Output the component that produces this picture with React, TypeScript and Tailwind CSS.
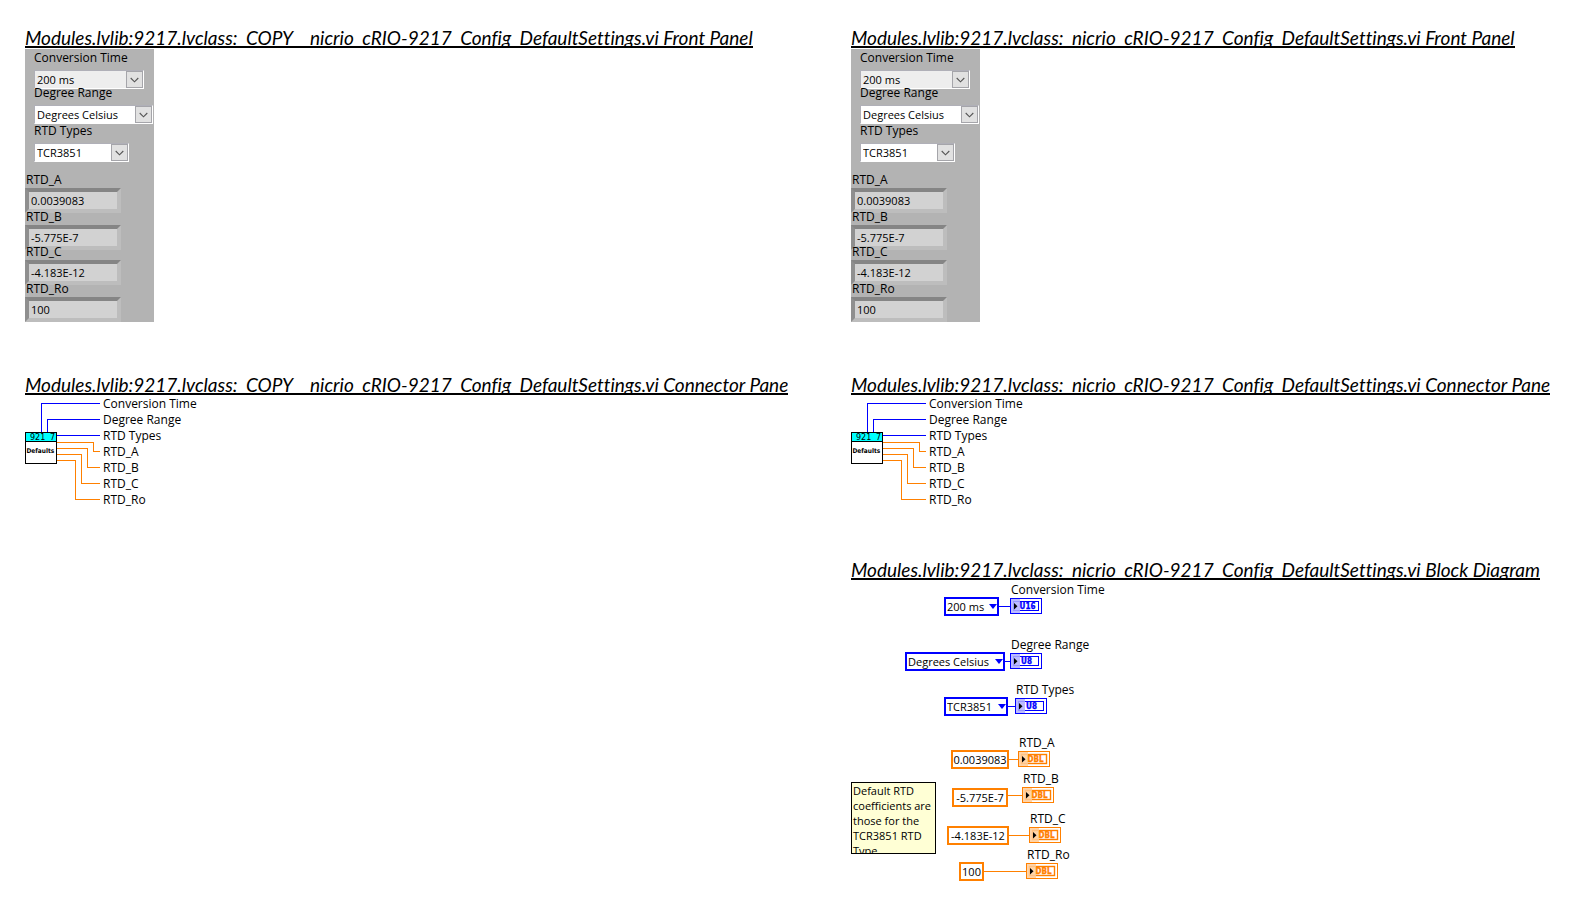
import { useId } from 'react';

const LABEL = "font-['Open_Sans','Noto_Sans',sans-serif] text-[12px]";
const VALUE = "font-['Open_Sans','Noto_Sans',sans-serif] text-[11px]";

function Heading({ children }: { children: string }) {
  return (
    <h2 className="h-7 w-max overflow-hidden border-b-2 border-black font-['Lato','Open_Sans',sans-serif] text-[19px] leading-[36px] italic whitespace-nowrap [font-variant-ligatures:none]">
      {children}
    </h2>
  );
}

function DropDown({ label, value, width, muted, className }: { label: string; value: string; width: string; muted?: boolean; className?: string }) {
  const id = useId();
  return (
    <div className={`pl-[9px] ${className ?? ''}`}>
      <label htmlFor={id} className={`relative z-10 block leading-2 ${LABEL}`}>
        {label}
      </label>
      <div className={`relative mt-2 ${width}`}>
        <select
          id={id}
          className={`block h-[19px] w-full appearance-none border border-[#b0b0b8] border-r-white border-b-white pl-[2px] leading-[17px] ${VALUE} ${muted ? 'bg-[#eeeeee]' : 'bg-white'}`}
        >
          <option>{value}</option>
        </select>
        <span className="pointer-events-none absolute top-px right-px flex h-[17px] w-[17px] items-center justify-center border border-[#a5a5aa] bg-[#e1e1e1]">
          <svg width="9" height="6" viewBox="0 0 9 6" fill="none" stroke="#555" strokeWidth="1.1">
            <path d="M0.7 1l3.8 3.8L8.3 1" />
          </svg>
        </span>
      </div>
    </div>
  );
}

function Indicator({ label, value, className }: { label: string; value: string; className?: string }) {
  const id = useId();
  return (
    <div className={className}>
      <label htmlFor={id} className={`relative z-10 block pl-px leading-2 ${LABEL}`}>
        {label}
      </label>
      <input
        id={id}
        readOnly
        value={value}
        className={`mt-[4px] block h-[25px] w-24 border-4 border-t-[#858585] border-r-[#bdbdbd] border-b-[#bdbdbd] border-l-[#8f8f8f] bg-[#d2d2d2] pl-[2px] leading-[17px] ${VALUE}`}
      />
    </div>
  );
}

function FrontPanel() {
  return (
    <div className="mt-px h-[273px] w-[129px] bg-[#b3b3b3] pt-[5px]">
      <DropDown label="Conversion Time" value="200 ms" width="w-[110px]" muted />
      <DropDown label="Degree Range" value="Degrees Celsius" width="w-[119px]" />
      <DropDown label="RTD Types" value="TCR3851" width="w-[95px]" className="mt-[3px]" />
      <Indicator label="RTD_A" value="0.0039083" className="mt-[14px]" />
      <Indicator label="RTD_B" value="-5.775E-7" />
      <Indicator label="RTD_C" value="-4.183E-12" className="-mt-[2px]" />
      <Indicator label="RTD_Ro" value="100" />
    </div>
  );
}

const TERMINALS = ['Conversion Time', 'Degree Range', 'RTD Types', 'RTD_A', 'RTD_B', 'RTD_C', 'RTD_Ro'];

function ConnectorPane() {
  return (
    <div className="mt-px flex">
      <svg width="78" height="112" viewBox="0 0 78 112" fill="none" strokeWidth="1" shapeRendering="crispEdges">
        <g stroke="#0000ff">
          <path d="M16.5 36V7.5H75" />
          <path d="M22.5 36V23.5H75" />
          <path d="M32 39.5H75" />
        </g>
        <g stroke="#ff8000">
          <path d="M32 46.5H68.5V55.5H75" />
          <path d="M32 52.5H62.5V71.5H75" />
          <path d="M32 58.5H56.5V87.5H75" />
          <path d="M32 64.5H50.5V103.5H75" />
        </g>
        <rect x="0.5" y="36.5" width="31" height="31" fill="#fff" stroke="#000" />
        <rect x="1" y="37" width="30" height="8" fill="#00ffff" />
        <path d="M0 45.5H32" stroke="#000" />
        <g fill="#000" fontFamily="'DejaVu Sans', sans-serif">
          <text x="5" y="44" fontSize="8">
            921
          </text>
          <text x="25" y="44" fontSize="8">
            7
          </text>
          <text x="1.5" y="57" fontSize="6.5" fontWeight="bold" fontFamily="'DejaVu Sans Condensed', sans-serif">
            Defaults
          </text>
        </g>
      </svg>
      <ul className={`leading-4 whitespace-nowrap ${LABEL}`}>
        {TERMINALS.map((t) => (
          <li key={t}>{t}</li>
        ))}
      </ul>
    </div>
  );
}

type Node = {
  label: string;
  value: string;
  type: string;
  left: number;
  width: number;
  terminal: number;
  top: number;
  drop: number;
};

const NODES: Node[] = [
  { label: 'Conversion Time', value: '200 ms', type: 'U16', left: 93, width: 55, terminal: 159, top: 18, drop: -1 },
  { label: 'Degree Range', value: 'Degrees Celsius', type: 'U8', left: 54, width: 100, terminal: 159, top: 73, drop: -1 },
  { label: 'RTD Types', value: 'TCR3851', type: 'U8', left: 93, width: 64, terminal: 164, top: 118, drop: -1 },
  { label: 'RTD_A', value: '0.0039083', type: 'DBL', left: 100, width: 58, terminal: 167, top: 171, drop: -1 },
  { label: 'RTD_B', value: '-5.775E-7', type: 'DBL', left: 101, width: 56, terminal: 171, top: 207, drop: 1 },
  { label: 'RTD_C', value: '-4.183E-12', type: 'DBL', left: 96, width: 62, terminal: 178, top: 247, drop: -1 },
  { label: 'RTD_Ro', value: '100', type: 'DBL', left: 108, width: 25, terminal: 175, top: 283, drop: -1 },
];

function Terminal({ type }: { type: string }) {
  const dbl = type === 'DBL';
  const color = dbl ? '#ff8000' : '#0000ff';
  return (
    <svg width="32" height="16" viewBox="0 0 32 16" className="block">
      <rect x="0.5" y="0.5" width="31" height="15" fill="#fff" stroke={color} />
      <rect x="3.5" y="3.5" width="25" height="9" fill="none" stroke={color} strokeWidth={dbl ? 1.4 : 1} />
      <rect x="1" y="1" width="9" height="14" fill={dbl ? '#ffcc99' : '#b0b0ff'} fillOpacity="0.85" />
      <path d="M4 5v6.5L7.5 8.2z" fill="#000" />
      <text
        x={type === 'U8' ? 16.5 : 17.5}
        y="11"
        fontSize="8"
        fontWeight="bold"
        fontFamily="'DejaVu Sans Condensed', 'DejaVu Sans', sans-serif"
        textAnchor="middle"
        fill={color}
        stroke={color}
        strokeWidth="0.3"
      >
        {type}
      </text>
    </svg>
  );
}

function DiagramNode({ node }: { node: Node }) {
  const id = useId();
  const ring = node.type !== 'DBL';
  const end = node.left + node.width;
  return (
    <>
      <label
        htmlFor={id}
        className={`absolute leading-4 whitespace-nowrap ${LABEL}`}
        style={{ left: node.terminal + 1, top: node.top - 16 }}
      >
        {node.label}
      </label>
      <div className="absolute h-[19px]" style={{ left: node.left, top: node.top + node.drop, width: node.width }}>
        {ring ? (
          <>
            <select
              id={id}
              className={`block h-[19px] w-full appearance-none border-2 border-[#0000ff] bg-white pl-px leading-[15px] ${VALUE}`}
            >
              <option>{node.value}</option>
            </select>
            <svg width="8" height="5" viewBox="0 0 8 5" className="pointer-events-none absolute top-[7px] right-[2px]">
              <path d="M0 0h8L4 5z" fill="#0000ff" />
            </svg>
          </>
        ) : (
          <input
            id={id}
            readOnly
            value={node.value}
            className={`block h-[19px] w-full border-2 border-[#ff8000] bg-white text-center leading-[15px] ${VALUE}`}
          />
        )}
      </div>
      <div
        className={`absolute h-px ${ring ? 'bg-[#0000ff]' : 'bg-[#ff8000]'}`}
        style={{ left: end, top: node.top + 8, width: node.terminal - end }}
      />
      <div className="absolute" style={{ left: node.terminal, top: node.top }}>
        <Terminal type={node.type} />
      </div>
    </>
  );
}

function BlockDiagram() {
  return (
    <div className="relative h-[302px] w-[260px]">
      {NODES.map((n) => (
        <DiagramNode key={n.label} node={n} />
      ))}
      <p
        className={`absolute top-[202px] left-0 h-[72px] w-[85px] overflow-hidden border border-black bg-[#ffffd5] pl-px leading-[15px] whitespace-nowrap ${VALUE}`}
      >
        Default RTD
        <br />
        coefficients are
        <br />
        those for the
        <br />
        TCR3851 RTD
        <br />
        Type
      </p>
    </div>
  );
}

function Column({ name, diagram }: { name: string; diagram?: boolean }) {
  return (
    <section>
      <Heading>{`${name} Front Panel`}</Heading>
      <FrontPanel />
      <div className="mt-[45px]">
        <Heading>{`${name} Connector Pane`}</Heading>
        <ConnectorPane />
      </div>
      {diagram && (
        <div className="mt-11">
          <Heading>{`${name} Block Diagram`}</Heading>
          <BlockDiagram />
        </div>
      )}
    </section>
  );
}

export default function App() {
  return (
    <main className="grid min-h-screen grid-cols-[826fr_738fr] bg-white pt-5 pl-[25px] text-black">
      <Column name="Modules.lvlib:9217.lvclass:_COPY__nicrio_cRIO-9217_Config_DefaultSettings.vi" />
      <Column name="Modules.lvlib:9217.lvclass:_nicrio_cRIO-9217_Config_DefaultSettings.vi" diagram />
    </main>
  );
}
